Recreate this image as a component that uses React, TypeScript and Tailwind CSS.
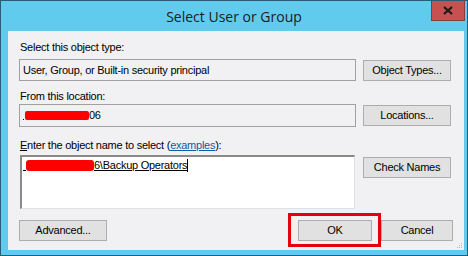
import React from "react";

const font = { fontFamily: '"Liberation Sans", Arial, sans-serif' };

function Btn({ children, w }: { children: React.ReactNode; w: string }) {
  return (
    <div
      className={`${w} h-[21px] flex items-center justify-center bg-[#e1e1e1] border border-[#adadad] text-[11px] text-black leading-none`}
    >
      {children}
    </div>
  );
}

export default function App() {
  return (
    <div className="w-[468px] h-[256px] bg-[#60cbec] border border-[#2b5d72] flex flex-col overflow-hidden" style={font}>
      <div className="relative h-[30px] shrink-0 flex items-center justify-center">
        <span className="text-[14px] text-[#1b1b1b] mt-[1px]" style={{ fontFamily: '"Open Sans", "Noto Sans", sans-serif' }}>
          Select User or Group
        </span>
        <div className="absolute right-[2px] top-[-1px] w-[34px] h-[21px] bg-[#c75050] border border-[#8a3a3a] flex items-center justify-center">
          <svg width="10" height="9" viewBox="0 0 10 9">
            <path d="M1 1 L9 8 M9 1 L1 8" stroke="#1a1a1a" strokeWidth="2.2" />
          </svg>
        </div>
      </div>
      <div className="relative flex-1 ml-[7px] mr-[3px] mb-[5px] bg-[#f1f0f3] flex flex-col pl-[11px] pr-[11px] text-[11px] tracking-[-0.25px] text-black">
        <div className="mt-[10px] h-[13px] leading-[13px] pl-[1px]">Select this object type:</div>
        <div className="mt-[5px] flex items-start gap-[7px]">
          <div className="w-[337px] h-[22px] border border-[#a0a0a0] flex items-center pl-[3px]">
            User, Group, or Built-in security principal
          </div>
          <div className="mt-[1px]">
            <Btn w="w-[88px]">Object Types...</Btn>
          </div>
        </div>
        <div className="mt-[9px] h-[13px] leading-[13px] pl-[1px]">From this location:</div>
        <div className="mt-[1px] flex items-start gap-[7px]">
          <div className="w-[337px] h-[23px] border border-[#a0a0a0] flex items-center pl-[3px]">
            <span className="w-[1px] h-[1px] bg-black mt-[8px] mr-[1px]" />
            <span className="w-[64px] h-[9px] bg-[#ff0000] rounded-[2px]" />
            <span>06</span>
          </div>
          <div className="mt-[1px]">
            <Btn w="w-[88px]">Locations...</Btn>
          </div>
        </div>
        <div className="mt-[12px] h-[13px] leading-[13px] pl-[1px]">
          <span className="underline">E</span>nter the object name to select (
          <span className="text-[#0b5ea8] underline">examples</span>):
        </div>
        <div className="mt-[3px] flex items-start gap-[8px]">
          <div className="ml-[1px] w-[335px] h-[54px] bg-white border-t-2 border-l-2 border-t-[#8a8a8a] border-l-[#8a8a8a] border-r border-b border-r-[#e0e0e0] border-b-[#e0e0e0] pt-[2px] pl-[1px]">
            <div className="flex items-center h-[13px]">
              <span className="w-[3px] h-[1px] bg-black self-end mb-[1px]" />
              <span className="w-[68px] h-[11px] bg-[#ff0000] rounded-[3px]" />
              <span className="underline leading-[13px]">6\Backup Operators</span>
              <span className="w-[1px] h-[13px] bg-black" />
            </div>
          </div>
          <div className="mt-[2px]">
            <Btn w="w-[88px]">Check Names</Btn>
          </div>
        </div>
        <div className="mt-[11px] flex items-start">
          <Btn w="w-[88px]">Advanced...</Btn>
          <div className="flex-1" />
          <div className="relative">
            <Btn w="w-[74px]">OK</Btn>
            <div className="absolute left-[-10px] right-[-9px] top-[-7px] bottom-[-6px] border-[3px] border-[#e3000f]" />
          </div>
          <div className="ml-[9px]">
            <Btn w="w-[72px]">Cancel</Btn>
          </div>
        </div>
        <svg className="absolute right-[1px] bottom-[1px]" width="8" height="8" viewBox="0 0 8 8">
          <rect x="6" y="2" width="1" height="1" fill="#b8b8b8" />
          <rect x="4" y="4" width="1" height="1" fill="#b8b8b8" />
          <rect x="6" y="4" width="1" height="1" fill="#b8b8b8" />
          <rect x="2" y="6" width="1" height="1" fill="#b8b8b8" />
          <rect x="4" y="6" width="1" height="1" fill="#b8b8b8" />
          <rect x="6" y="6" width="1" height="1" fill="#b8b8b8" />
        </svg>
      </div>
    </div>
  );
}
